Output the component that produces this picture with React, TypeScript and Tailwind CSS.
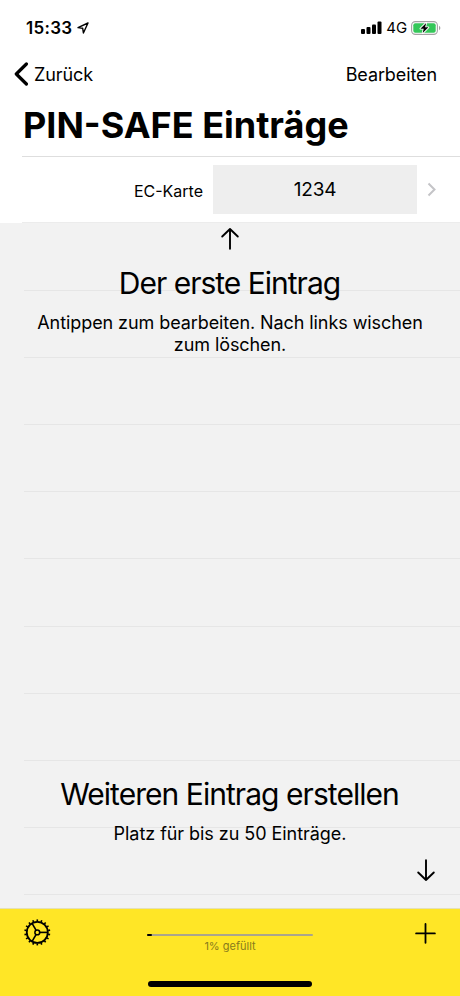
const ROWS = Array.from({ length: 10 }, (_, i) => i);
const TEETH = Array.from({ length: 18 }, (_, i) => i * 20 + 10);

const LocationIcon = () => (
  <svg width="12" height="12" viewBox="0 0 12 12" fill="none" stroke="black" strokeWidth="1.4" strokeLinejoin="round">
    <path d="M11 1 L1 5.6 L5.7 6.3 L6.4 11 Z" />
  </svg>
);

const SignalIcon = () => (
  <svg width="22" height="14" viewBox="0 0 22 14">
    <rect x="1" y="8" width="4" height="5" rx="1" />
    <rect x="6.5" y="6" width="4" height="7" rx="1" />
    <rect x="12" y="3.5" width="4" height="9.5" rx="1" />
    <rect x="17.5" y="0.5" width="4" height="12.5" rx="1" />
  </svg>
);

const BatteryIcon = () => (
  <svg width="30" height="14" viewBox="0 0 30 14">
    <rect x="0.6" y="0.6" width="25.8" height="12.8" rx="3.8" fill="none" stroke="#a3a3a3" strokeWidth="1.1" />
    <rect x="2.3" y="2.3" width="22.4" height="9.4" rx="2" fill="#34c759" />
    <path d="M28 4.7 Q29.4 5.4 29.4 7 Q29.4 8.6 28 9.3 Z" fill="#a3a3a3" />
    <path d="M15.2 1.9 L9.4 7.7 H12.7 L11.7 12.1 L17.4 6.3 H14.1 Z" stroke="white" strokeWidth="1.8" strokeLinejoin="round" paintOrder="stroke" />
  </svg>
);

const GearIcon = () => (
  <svg width="28" height="28" viewBox="-14.3 -13.4 28 28" fill="none" stroke="black">
    <circle r="10.5" strokeWidth="1.8" />
    <circle r="2.4" strokeWidth="1.5" />
    {[0, 120, 240].map((a) => (
      <path key={a} d="M2.6 0 H10.4" strokeWidth="1.6" transform={`rotate(${a})`} />
    ))}
    {TEETH.map((a) => (
      <path key={a} d="M11 0 H13" strokeWidth="1.6" transform={`rotate(${a})`} />
    ))}
  </svg>
);

const ArrowIcon = ({ className = '' }: { className?: string }) => (
  <svg width="20" height="24" viewBox="0 0 20 24" fill="none" stroke="black" strokeWidth="1.9" strokeLinecap="round" strokeLinejoin="round" className={className}>
    <path d="M10 21.8 V2 M2.2 9.5 L10 2 L17.8 9.5" />
  </svg>
);

const StatusBar = () => (
  <div className="flex h-14 items-center justify-between pl-[26px] pr-[19px]">
    <div className="flex items-center gap-[5px]">
      <span className="pt-px text-[17px] font-semibold tracking-[0.3px]">15:33</span>
      <LocationIcon />
    </div>
    <div className="flex items-center">
      <SignalIcon />
      <span className="ml-[4px] mr-[4px] text-[15px] tracking-[-0.1px]">4G</span>
      <BatteryIcon />
    </div>
  </div>
);

const NavBar = () => (
  <div className="flex h-9 items-center justify-between pl-[14px] pr-[23px] text-[18px] tracking-[-0.1px]">
    <button className="flex items-center gap-[5px]">
      <svg width="15" height="24" viewBox="0 0 15 24" fill="none" stroke="black" strokeWidth="3.2" strokeLinecap="round" strokeLinejoin="round">
        <path d="M12.4 2 L2.3 12 L12.4 22" />
      </svg>
      <span>Zurück</span>
    </button>
    <button>Bearbeiten</button>
  </div>
);

const EntryRow = ({ name, pin }: { name: string; pin: string }) => (
  <div className="ml-[22px] flex h-[66px] items-center border-b border-[#ececec] pr-[23px]">
    <span className="w-[181px] pt-[2px] text-right text-[16px]">{name}</span>
    <div className="ml-[10px] flex h-[49px] w-[204px] items-center justify-center bg-[#eeeeee] pt-px text-[19px] tracking-[-0.2px]">{pin}</div>
    <svg width="10" height="15" viewBox="0 0 10 15" fill="none" stroke="#c4c4c7" strokeWidth="2" className="ml-[10px]">
      <path d="M1.5 1.5 L7.5 7.5 L1.5 13.5" />
    </svg>
  </div>
);

const BottomBar = () => (
  <div className="flex h-[88px] flex-col items-center justify-between border-t border-[#e4e0b8] bg-[#ffe626] pb-[9px]">
    <div className="grid w-full grid-cols-[147px_166px_1fr] pt-[10px]">
      <div className="pl-[23px]">
        <GearIcon />
      </div>
      <div className="flex flex-col items-center pt-[15px]">
        <div className="h-[2px] w-full rounded-full bg-[#aba58a]">
          <div className="h-[2px] w-[5px] rounded-full bg-black" />
        </div>
        <span className="mt-[3px] text-[11px] leading-[14px] text-[#887b1d]">1% gefüllt</span>
      </div>
      <svg width="22" height="22" viewBox="0 0 22 22" stroke="black" strokeWidth="1.8" strokeLinecap="round" className="mr-[24px] mt-[3px] justify-self-end">
        <path d="M11.5 2 V20.8 M2.1 11.4 H20.9" />
      </svg>
    </div>
    <div className="h-[6px] w-[164px] rounded-full bg-black" />
  </div>
);

export default function App() {
  return (
    <div className="flex h-[996px] w-[460px] flex-col overflow-hidden bg-white font-['Inter',sans-serif] text-black">
      <StatusBar />
      <NavBar />
      <h1 className="ml-[22px] h-[65px] border-b border-[#dedede] pl-px pt-[10px] text-[36px] font-bold leading-[46px]">PIN-SAFE Einträge</h1>
      <EntryRow name="EC-Karte" pin="1234" />

      <main className="relative flex-1 overflow-hidden bg-[#f2f2f2] pt-px">
        {ROWS.map((i) => (
          <div key={i} className="ml-6 h-[67.1px] border-b border-[#e6e6e6]" />
        ))}
        <div className="absolute inset-0 flex flex-col items-center text-center">
          <ArrowIcon className="mt-[4px]" />
          <h2 className="mt-[14px] pr-px text-[30px] leading-[36px] tracking-[-1px]">Der erste Eintrag</h2>
          <p className="mt-[11px] w-[400px] text-[18px] leading-[22px] tracking-[-0.08px]">Antippen zum bearbeiten. Nach links wischen zum löschen.</p>
          <h2 className="mt-[420px] pr-px text-[30px] leading-[36px] tracking-[-0.95px]">Weiteren Eintrag erstellen</h2>
          <p className="mt-[11px] text-[18px] leading-[22px] tracking-[-0.05px]">Platz für bis zu 50 Einträge.</p>
          <ArrowIcon className="mr-[24px] mt-[13px] rotate-180 self-end" />
        </div>
      </main>

      <BottomBar />
    </div>
  );
}
